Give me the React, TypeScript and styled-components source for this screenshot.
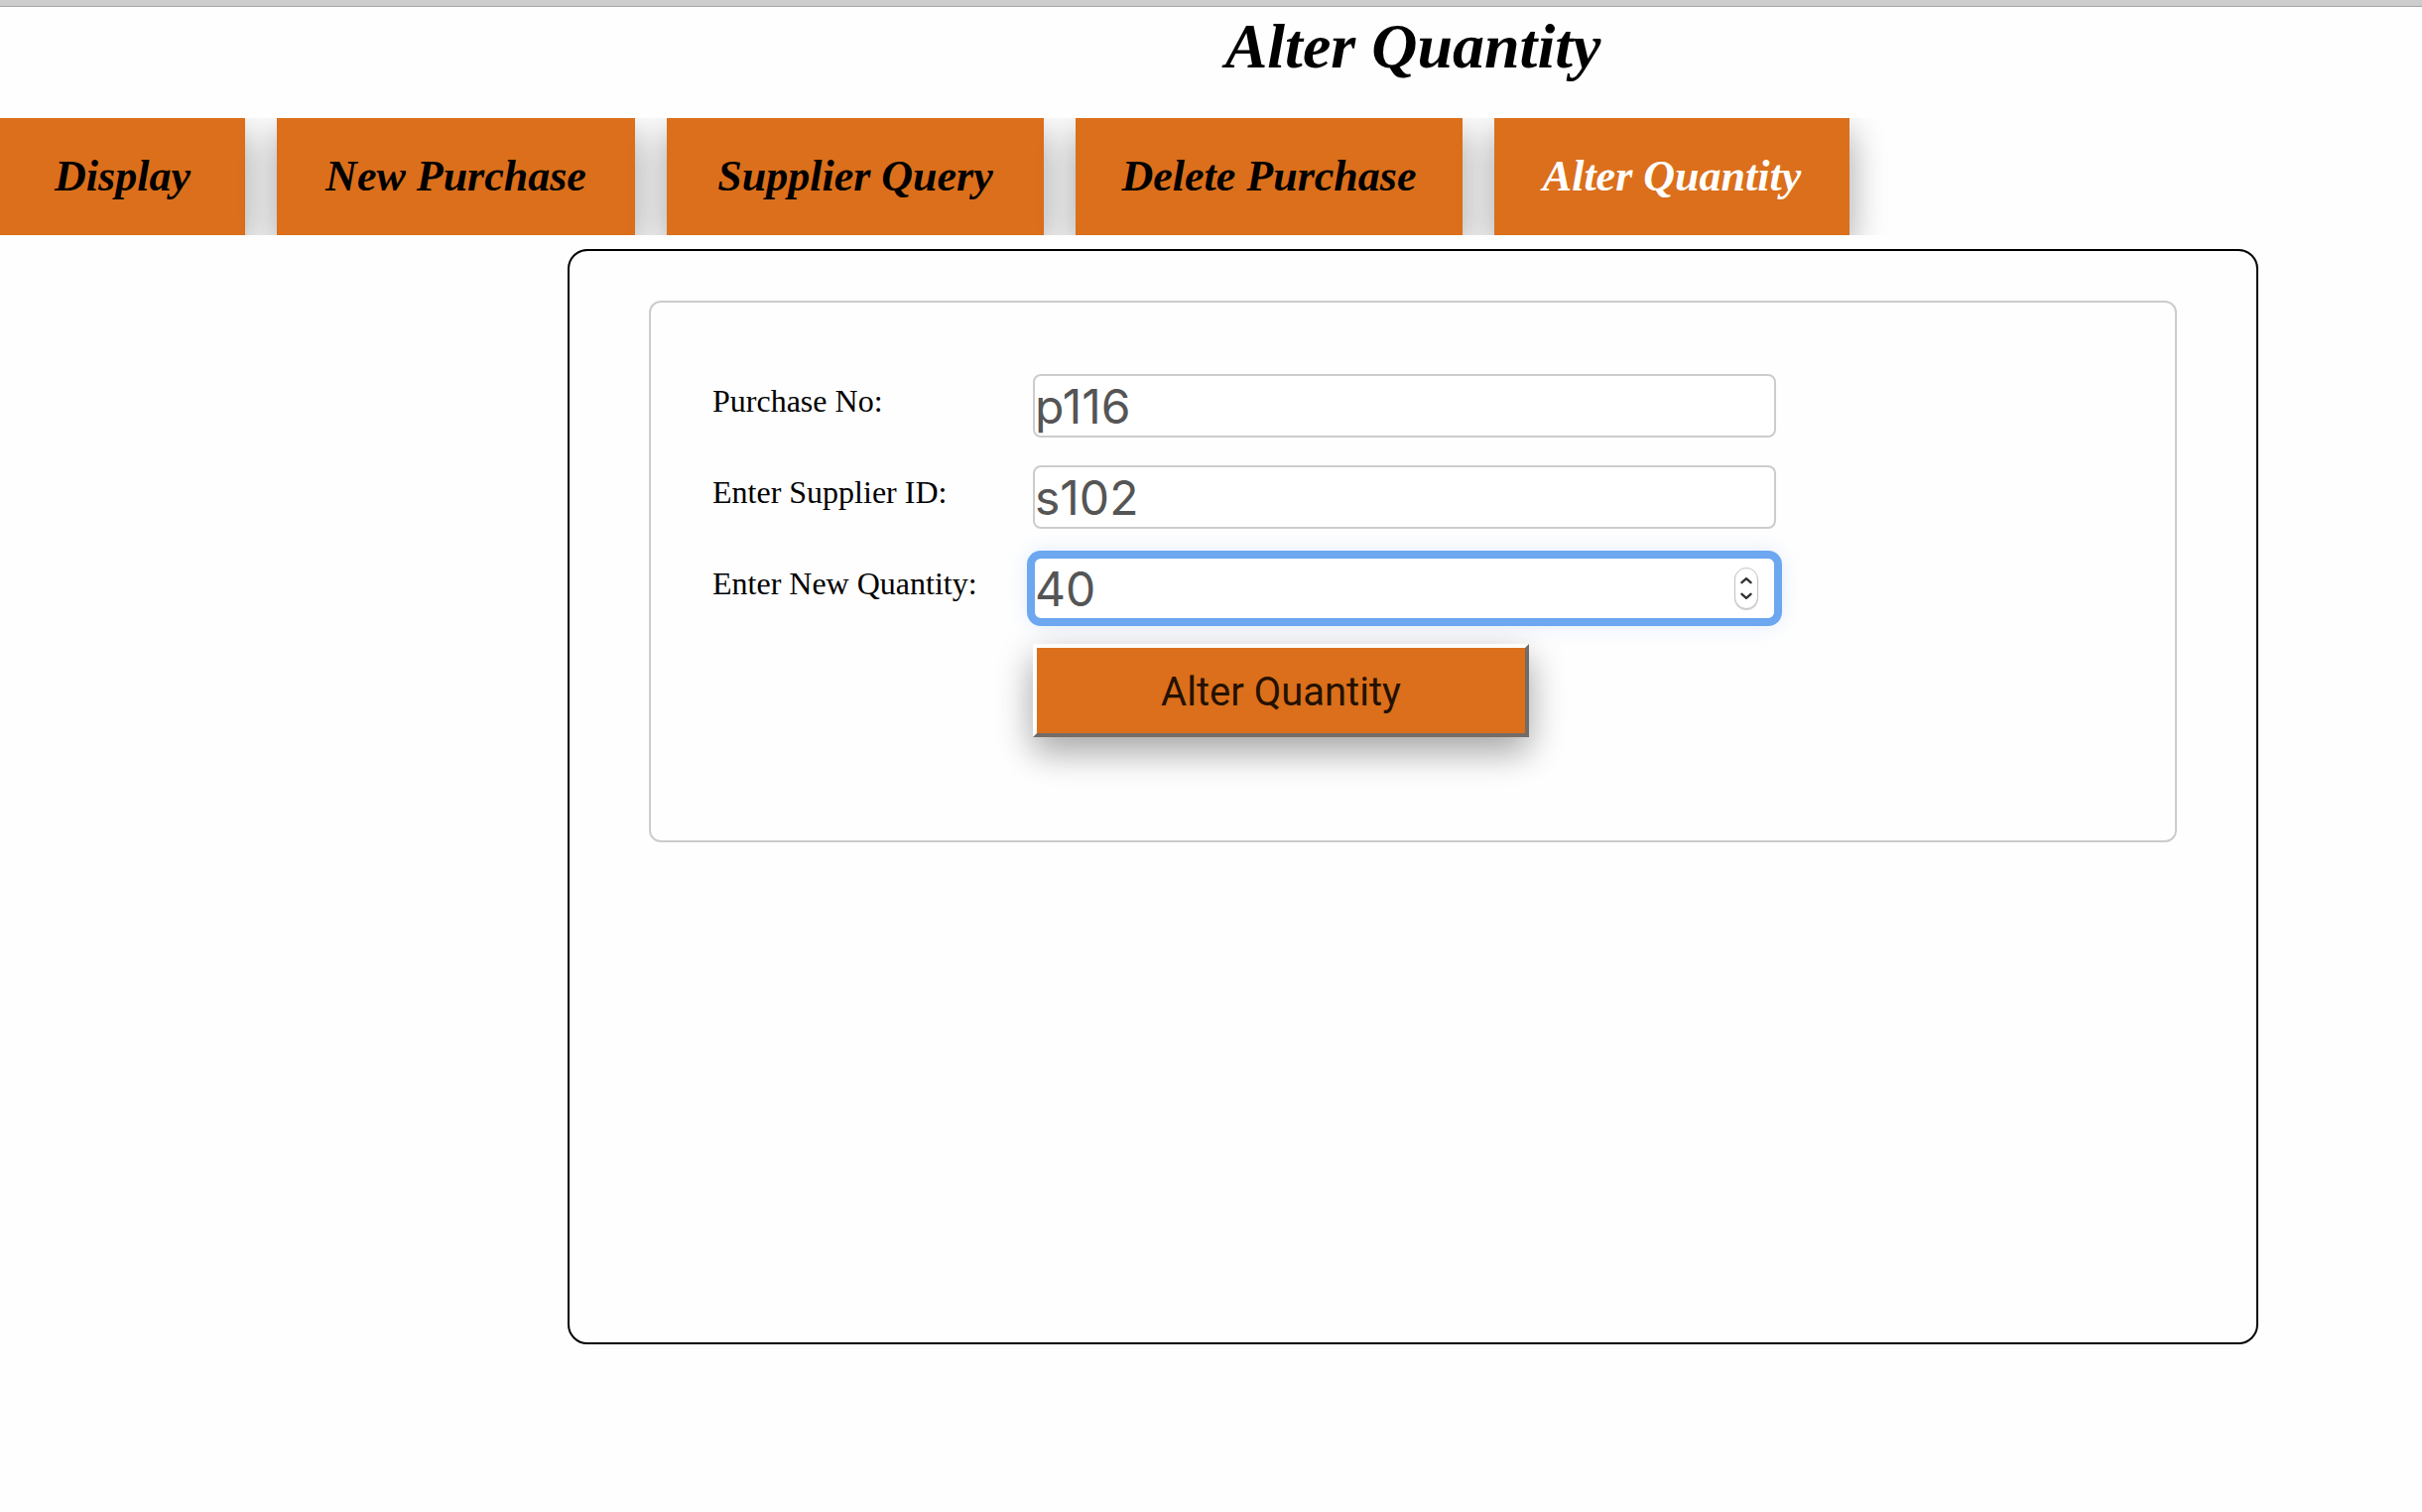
import React, { useState } from "react";
import styled, { createGlobalStyle } from "styled-components";

const orange = "#db6f1b";
const liftShadow =
  "0 16px 32px 0 rgba(0, 0, 0, 0.2), 0 12px 40px 0 rgba(0, 0, 0, 0.19)";
const script = `"Apple Chancery", "Lucida Calligraphy", "Z003", "URW Chancery L", "Liberation Serif", cursive`;
const sans = `Inter, "Liberation Sans", sans-serif`;

const GlobalStyle = createGlobalStyle`
  *, *::before, *::after { box-sizing: border-box; }
  body {
    margin: 0;
    background: #fefefe;
    color: #000;
    font-family: "Liberation Serif", serif;
    overflow-x: hidden;
  }
`;

const Page = styled.div`
  min-height: 100vh;
  border-top: 6px solid #cdcdcd;
`;

const Header = styled.header`
  border-top: 1px solid #a6a6a6;
  padding: 4px 0 36px 407px;
  text-align: center;
`;

const Title = styled.h1`
  margin: 0;
  font: italic 700 64px/72px ${script};
`;

const Tabs = styled.nav`
  display: grid;
  grid-template-columns: 247px 361px 380px 390px 358px;
  gap: 32px;
  height: 118px;
  overflow: hidden;
`;

const Tab = styled.a<{ $active?: boolean }>`
  display: flex;
  align-items: center;
  justify-content: center;
  background: ${orange};
  box-shadow: ${liftShadow};
  color: ${(p) => (p.$active ? "#fff" : "#000")};
  font: italic 700 44px/56px ${script};
  text-decoration: none;
  white-space: nowrap;
`;

const Panel = styled.main`
  margin: 14px 165px 0 572px;
  min-height: 1104px;
  padding: 50px 80px;
  border: 2px solid #000;
  border-radius: 20px;
`;

const Form = styled.form`
  display: flex;
  flex-direction: column;
  gap: 28px;
  padding: 72px 62px 104px;
  border: 2px solid #ccc;
  border-radius: 12px;
`;

const Row = styled.div`
  display: grid;
  grid-template-columns: 323px 749px;
  align-items: center;
`;

const Label = styled.label`
  padding-bottom: 10px;
  font-size: 32px;
  line-height: 36px;
`;

const Field = styled.div`
  position: relative;
  display: flex;
`;

const Input = styled.input<{ $highlighted?: boolean }>`
  width: 100%;
  height: 64px;
  margin: 0;
  padding: 0;
  border: 2px solid ${(p) => (p.$highlighted ? "#6ca7f0" : "#ccc")};
  border-radius: 8px;
  outline: none;
  background: #fff;
  box-shadow: ${(p) =>
    p.$highlighted
      ? "0 0 0 6px #6ca7f0, 0 0 20px 6px rgba(108, 167, 240, 0.2)"
      : "none"};
  color: #555;
  font: 400 48px/56px ${sans};
  appearance: textfield;

  &::-webkit-inner-spin-button {
    appearance: none;
    margin: 0;
  }
`;

const Stepper = styled.div`
  position: absolute;
  top: 11px;
  right: 18px;
  display: flex;
  flex-direction: column;
  width: 24px;
  height: 42px;
  overflow: hidden;
  border: 1px solid #c4c4c4;
  border-radius: 12px;
  background: #fff;
  box-shadow: 0 1px 1px rgba(0, 0, 0, 0.2);
`;

const Step = styled.button`
  display: flex;
  flex: 1;
  align-items: center;
  justify-content: center;
  padding: 4px 0 0;
  border: 0;
  background: none;

  & + & {
    padding: 0 0 4px;
  }
`;

const Submit = styled.button`
  grid-column: 2;
  width: 500px;
  height: 94px;
  margin-top: -4px;
  padding: 4px 0 0;
  border: 4px solid;
  border-color: #fffefc #756b66 #756b66 #fffefc;
  background: ${orange};
  box-shadow: ${liftShadow};
  color: #241100;
  font: 400 40px/48px Roboto, "Liberation Sans", sans-serif;
`;

function Chevron({ up }: { up?: boolean }) {
  return (
    <svg width="12" height="8" viewBox="0 0 12 8" aria-hidden="true">
      <path
        d={up ? "M1.500 6.200 6 2.200l4.500 4" : "M1.500 1.800 6 5.800l4.500-4"}
        fill="none"
        stroke="#333"
        strokeWidth="2.4"
        strokeLinecap="round"
        strokeLinejoin="round"
      />
    </svg>
  );
}

const tabs = [
  "Display",
  "New Purchase",
  "Supplier Query",
  "Delete Purchase",
  "Alter Quantity",
];

export default function App() {
  const [quantity, setQuantity] = useState(40);

  return (
    <>
      <GlobalStyle />
      <Page>
        <Header>
          <Title>Alter Quantity</Title>
        </Header>
        <Tabs>
          {tabs.map((name) => (
            <Tab key={name} href="#" $active={name === "Alter Quantity"}>
              {name}
            </Tab>
          ))}
        </Tabs>
        <Panel>
          <Form onSubmit={(e) => e.preventDefault()}>
            <Row>
              <Label htmlFor="purchase">Purchase No:</Label>
              <Input id="purchase" type="text" defaultValue="p116" />
            </Row>
            <Row>
              <Label htmlFor="supplier">Enter Supplier ID:</Label>
              <Input id="supplier" type="text" defaultValue="s102" />
            </Row>
            <Row>
              <Label htmlFor="quantity">Enter New Quantity:</Label>
              <Field>
                <Input
                  id="quantity"
                  type="number"
                  $highlighted
                  value={quantity}
                  onChange={(e) => setQuantity(Number(e.target.value))}
                />
                <Stepper>
                  <Step
                    type="button"
                    aria-label="Increase"
                    onClick={() => setQuantity(quantity + 1)}
                  >
                    <Chevron up />
                  </Step>
                  <Step
                    type="button"
                    aria-label="Decrease"
                    onClick={() => setQuantity(quantity - 1)}
                  >
                    <Chevron />
                  </Step>
                </Stepper>
              </Field>
            </Row>
            <Row>
              <Submit type="submit">Alter Quantity</Submit>
            </Row>
          </Form>
        </Panel>
      </Page>
    </>
  );
}
